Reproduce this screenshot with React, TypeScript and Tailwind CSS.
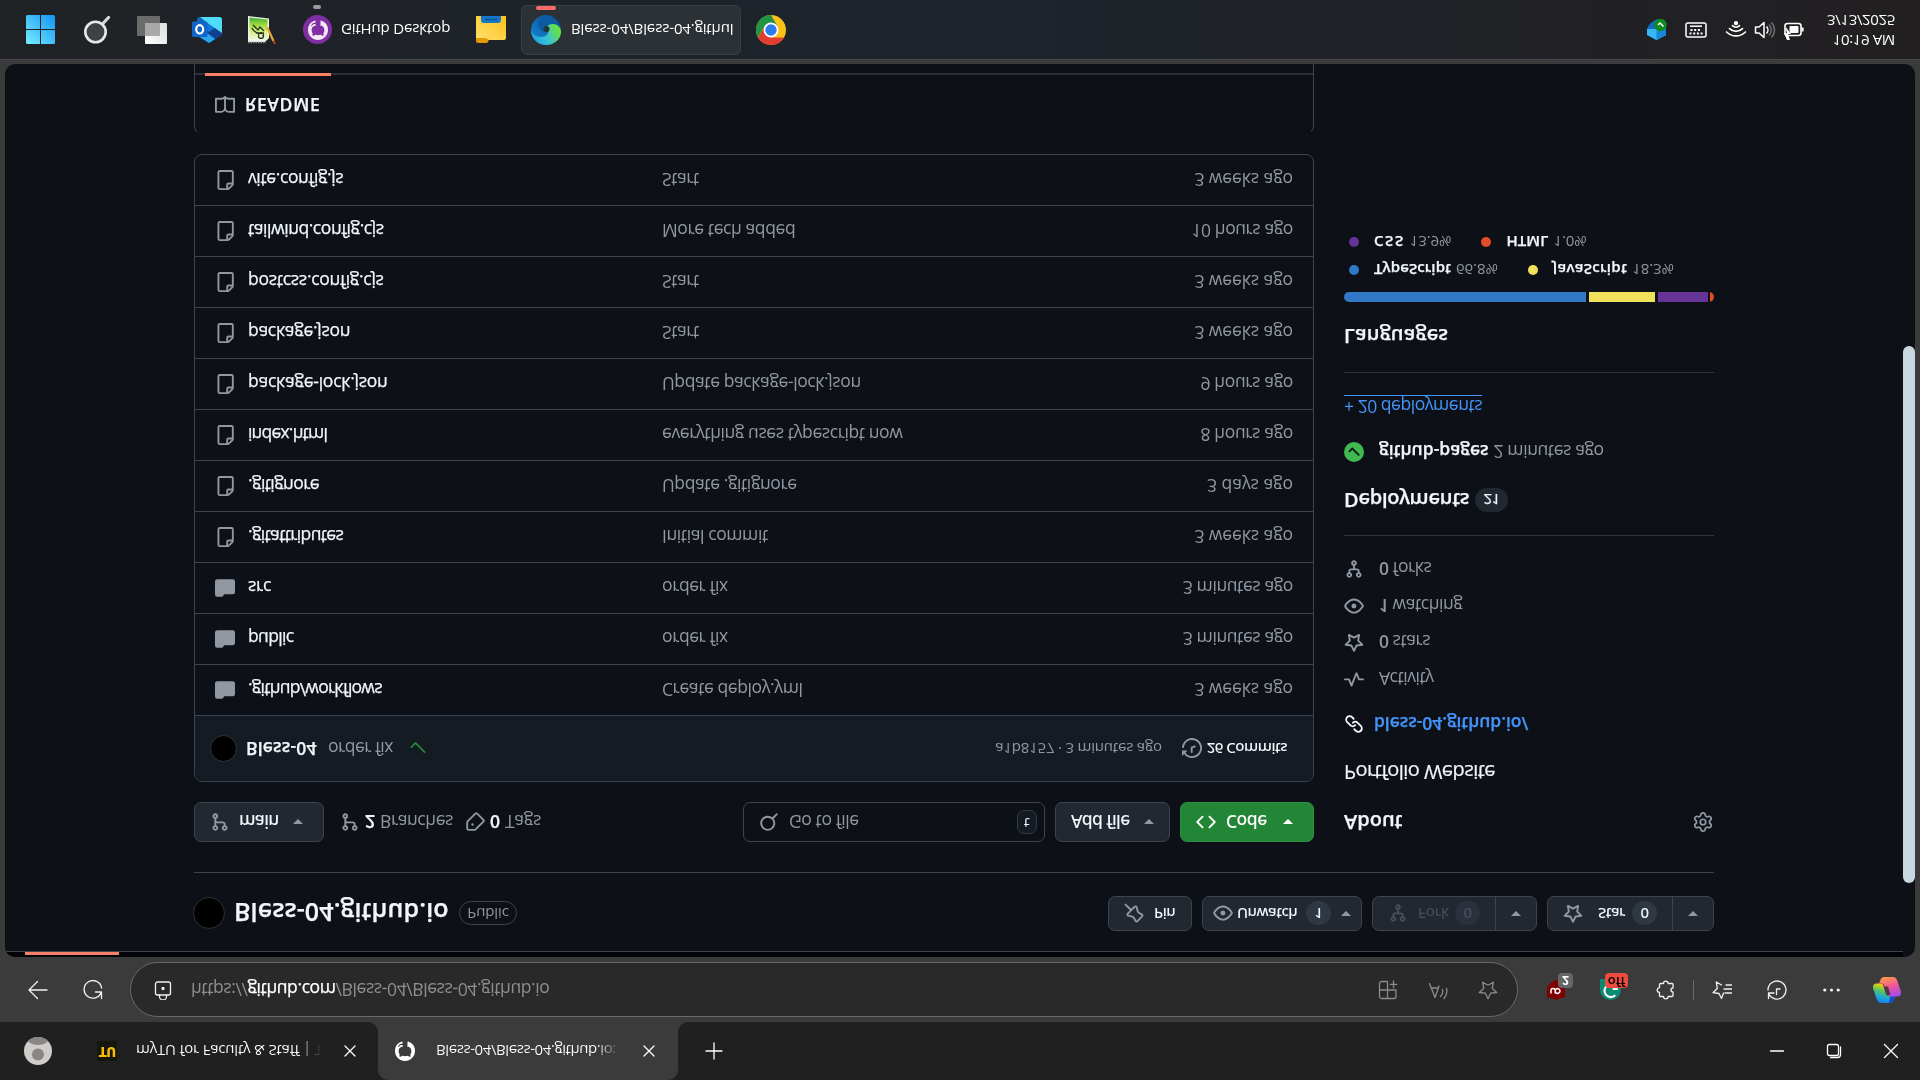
import React from "react";
import { Settings } from "lucide-react";

/* ---------- icon paths (16px grid) ---------- */
const P = {
  branch:
    "M9.5 3.25a2.25 2.25 0 1 1 3 2.122V6A2.5 2.5 0 0 1 10 8.5H6a1 1 0 0 0-1 1v1.128a2.251 2.251 0 1 1-1.5 0V5.372a2.25 2.25 0 1 1 1.5 0v1.836A2.493 2.493 0 0 1 6 7h4a1 1 0 0 0 1-1v-.628A2.25 2.25 0 0 1 9.5 3.25Zm-6 0a.75.75 0 1 0 1.5 0 .75.75 0 0 0-1.5 0Zm8.25-.75a.75.75 0 1 0 0 1.5.75.75 0 0 0 0-1.5ZM4.25 12a.75.75 0 1 0 0 1.5.75.75 0 0 0 0-1.5Z",
  fork: "M5 5.372v.878c0 .414.336.75.75.75h4.5a.75.75 0 0 0 .75-.75v-.878a2.25 2.25 0 1 1 1.5 0v.878a2.25 2.25 0 0 1-2.25 2.25h-1.5v2.128a2.251 2.251 0 1 1-1.5 0V8.5h-1.5A2.25 2.25 0 0 1 3.5 6.25v-.878a2.25 2.25 0 1 1 1.5 0ZM5 3.25a.75.75 0 1 0-1.5 0 .75.75 0 0 0 1.5 0Zm6.75.75a.75.75 0 1 0 0-1.5.75.75 0 0 0 0 1.5Zm-3 8.75a.75.75 0 1 0-1.5 0 .75.75 0 0 0 1.5 0Z",
  tag: "M1 7.775V2.75C1 1.784 1.784 1 2.75 1h5.025c.464 0 .91.184 1.238.513l6.25 6.25a1.75 1.75 0 0 1 0 2.474l-5.026 5.026a1.75 1.75 0 0 1-2.474 0l-6.25-6.25A1.752 1.752 0 0 1 1 7.775Zm1.5 0c0 .066.026.13.073.177l6.25 6.25a.25.25 0 0 0 .354 0l5.025-5.025a.25.25 0 0 0 0-.354l-6.25-6.25a.25.25 0 0 0-.177-.073H2.75a.25.25 0 0 0-.25.25ZM6 5a1 1 0 1 1 0 2 1 1 0 0 1 0-2Z",
  search:
    "M10.68 11.74a6 6 0 0 1-7.922-8.982 6 6 0 0 1 8.982 7.922l3.04 3.04a.749.749 0 0 1-.326 1.275.749.749 0 0 1-.734-.215ZM11.5 7a4.499 4.499 0 1 0-8.997 0A4.499 4.499 0 0 0 11.5 7Z",
  pin: "m11.294.984 3.722 3.722a1.75 1.75 0 0 1-.504 2.826l-1.327.613a3.089 3.089 0 0 0-1.707 2.084l-.584 2.454c-.317 1.332-1.972 1.8-2.94.832L5.75 11.311 1.78 15.28a.749.749 0 1 1-1.06-1.06l3.969-3.97-2.204-2.204c-.968-.968-.5-2.623.832-2.94l2.454-.584a3.08 3.08 0 0 0 2.084-1.707l.613-1.327a1.75 1.75 0 0 1 2.826-.504ZM6.283 9.723l2.732 2.731a.25.25 0 0 0 .42-.119l.584-2.454a4.586 4.586 0 0 1 2.537-3.098l1.328-.613a.25.25 0 0 0 .072-.404l-3.722-3.722a.25.25 0 0 0-.404.072l-.613 1.328a4.584 4.584 0 0 1-3.098 2.537l-2.454.584a.25.25 0 0 0-.119.42l2.731 2.732Z",
  eye: "M8 2c1.981 0 3.671.992 4.933 2.078 1.27 1.091 2.187 2.345 2.637 3.023a1.62 1.62 0 0 1 0 1.798c-.45.678-1.367 1.932-2.637 3.023C11.67 13.008 9.981 14 8 14c-1.981 0-3.671-.992-4.933-2.078C1.797 10.83.88 9.576.43 8.898a1.62 1.62 0 0 1 0-1.798c.45-.677 1.367-1.931 2.637-3.022C4.33 2.992 6.019 2 8 2ZM1.679 7.932a.12.12 0 0 0 0 .136c.411.622 1.241 1.75 2.366 2.717C5.176 11.758 6.527 12.5 8 12.5c1.473 0 2.825-.742 3.955-1.715 1.124-.967 1.954-2.096 2.366-2.717a.12.12 0 0 0 0-.136c-.412-.621-1.242-1.75-2.366-2.717C10.824 4.242 9.473 3.5 8 3.5c-1.473 0-2.825.742-3.955 1.715-1.124.967-1.954 2.096-2.366 2.717ZM8 10a2 2 0 1 1-.001-3.999A2 2 0 0 1 8 10Z",
  star: "M8 .25a.75.75 0 0 1 .673.418l1.882 3.815 4.21.612a.75.75 0 0 1 .416 1.279l-3.046 2.97.719 4.192a.751.751 0 0 1-1.088.791L8 12.347l-3.766 1.98a.75.75 0 0 1-1.088-.79l.72-4.194L.818 6.374a.75.75 0 0 1 .416-1.28l4.21-.611L7.327.668A.75.75 0 0 1 8 .25Zm0 2.445L6.615 5.5a.75.75 0 0 1-.564.41l-3.097.45 2.24 2.184a.75.75 0 0 1 .216.664l-.528 3.084 2.769-1.456a.75.75 0 0 1 .698 0l2.77 1.456-.53-3.084a.75.75 0 0 1 .216-.664l2.24-2.183-3.096-.45a.75.75 0 0 1-.564-.41L8 2.694Z",
  code: "m11.28 3.22 4.25 4.25a.75.75 0 0 1 0 1.06l-4.25 4.25a.749.749 0 0 1-1.275-.326.749.749 0 0 1 .215-.734L13.94 8l-3.72-3.72a.749.749 0 0 1 .326-1.275.749.749 0 0 1 .734.215Zm-6.56 0a.751.751 0 0 1 1.042.018.751.751 0 0 1 .018 1.042L2.06 8l3.72 3.72a.749.749 0 0 1-.326 1.275.749.749 0 0 1-.734-.215L.47 8.53a.75.75 0 0 1 0-1.06Z",
  history:
    "m.427 1.927 1.215 1.215a8.002 8.002 0 1 1-1.6 5.685.75.75 0 1 1 1.493-.154 6.5 6.5 0 1 0 1.18-4.458l1.358 1.358A.25.25 0 0 1 3.896 6H.25A.25.25 0 0 1 0 5.75V2.104a.25.25 0 0 1 .427-.177ZM7.75 4a.75.75 0 0 1 .75.75v2.992l2.028.812a.75.75 0 0 1-.557 1.392l-2.5-1A.751.751 0 0 1 7 8.25v-3.5A.75.75 0 0 1 7.75 4Z",
  file: "M2 1.75C2 .784 2.784 0 3.75 0h6.586c.464 0 .909.184 1.237.513l2.914 2.914c.329.328.513.773.513 1.237v9.586A1.75 1.75 0 0 1 13.25 16h-9.5A1.75 1.75 0 0 1 2 14.25Zm1.75-.25a.25.25 0 0 0-.25.25v12.5c0 .138.112.25.25.25h9.5a.25.25 0 0 0 .25-.25V6h-2.75A1.75 1.75 0 0 1 9 4.25V1.5Zm6.75.062V4.25c0 .138.112.25.25.25h2.688l-.011-.013-2.914-2.914-.013-.011Z",
  folder:
    "M1.75 1A1.75 1.75 0 0 0 0 2.75v10.5C0 14.216.784 15 1.75 15h12.5A1.75 1.75 0 0 0 16 13.25v-8.5A1.75 1.75 0 0 0 14.25 3H7.5a.25.25 0 0 1-.2-.1l-.9-1.2C6.07 1.26 5.55 1 5 1H1.75Z",
  book: "M0 1.75A.75.75 0 0 1 .75 1h4.253c1.227 0 2.317.59 3 1.501A3.743 3.743 0 0 1 11.006 1h4.245a.75.75 0 0 1 .75.75v10.5a.75.75 0 0 1-.75.75h-4.507a2.25 2.25 0 0 0-1.591.659l-.622.621a.75.75 0 0 1-1.06 0l-.622-.621A2.25 2.25 0 0 0 5.258 13H.75a.75.75 0 0 1-.75-.75Zm7.251 10.324.004-5.073-.002-2.253A2.25 2.25 0 0 0 5.003 2.5H1.5v9h3.757a3.75 3.75 0 0 1 1.994.574ZM8.755 4.75l-.004 7.322a3.752 3.752 0 0 1 1.992-.572H14.5v-9h-3.495a2.25 2.25 0 0 0-2.25 2.25Z",
  link: "m7.775 3.275 1.25-1.25a3.5 3.5 0 1 1 4.95 4.95l-2.5 2.5a3.5 3.5 0 0 1-4.95 0 .751.751 0 0 1 .018-1.042.751.751 0 0 1 1.042-.018 1.998 1.998 0 0 0 2.83 0l2.5-2.5a2.002 2.002 0 0 0-2.83-2.83l-1.25 1.25a.751.751 0 0 1-1.042-.018.751.751 0 0 1-.018-1.042Zm-4.69 9.64a1.998 1.998 0 0 0 2.83 0l1.25-1.25a.751.751 0 0 1 1.042.018.751.751 0 0 1 .018 1.042l-1.25 1.25a3.5 3.5 0 1 1-4.95-4.95l2.5-2.5a3.5 3.5 0 0 1 4.95 0 .751.751 0 0 1-.018 1.042.751.751 0 0 1-1.042.018 1.998 1.998 0 0 0-2.83 0l-2.5 2.5a1.998 1.998 0 0 0 0 2.83Z",
  pulse:
    "M6 2c.306 0 .582.187.696.471L10 10.731l1.304-3.26A.751.751 0 0 1 12 7h3.25a.75.75 0 0 1 0 1.5h-2.742l-1.812 4.528a.751.751 0 0 1-1.392 0L6 4.77 4.696 8.03A.75.75 0 0 1 4 8.5H.75a.75.75 0 0 1 0-1.5h2.742l1.812-4.529A.751.751 0 0 1 6 2Z",
  check:
    "M13.78 4.22a.75.75 0 0 1 0 1.06l-7.25 7.25a.75.75 0 0 1-1.06 0L2.22 9.28a.751.751 0 0 1 .018-1.042.751.751 0 0 1 1.042-.018L6 10.94l6.72-6.72a.75.75 0 0 1 1.06 0Z",
  github:
    "M8 0c4.42 0 8 3.58 8 8a8.013 8.013 0 0 1-5.45 7.59c-.4.08-.55-.17-.55-.38 0-.27.01-1.13.01-2.2 0-.75-.25-1.23-.54-1.48 1.78-.2 3.65-.88 3.65-3.95 0-.88-.31-1.59-.82-2.15.08-.2.36-1.02-.08-2.12 0 0-.67-.22-2.2.82-.64-.18-1.32-.27-2-.27-.68 0-1.36.09-2 .27-1.53-1.03-2.2-.82-2.2-.82-.44 1.1-.16 1.92-.08 2.12-.51.56-.82 1.28-.82 2.15 0 3.06 1.86 3.75 3.64 3.95-.23.2-.44.55-.51 1.07-.46.21-1.61.55-2.33-.66-.15-.24-.6-.83-1.23-.82-.67.01-.27.38.01.53.34.19.73.9.82 1.13.16.45.68 1.31 2.69.94 0 .67.01 1.3.01 1.49 0 .21-.15.45-.55.38A7.995 7.995 0 0 1 0 8c0-4.42 3.58-8 8-8Z",
};

function Oct({ d, className = "" }: { d: string; className?: string }) {
  return (
    <svg viewBox="0 0 16 16" fill="currentColor" className={`size-5 shrink-0 ${className}`}>
      <path d={d} />
    </svg>
  );
}

function Caret({ className = "" }: { className?: string }) {
  return (
    <svg viewBox="0 0 10 5" fill="currentColor" className={`h-[5px] w-[10px] shrink-0 ${className}`}>
      <path d="M0 0h10L5 5z" />
    </svg>
  );
}

function Line({ children, className = "" }: { children: React.ReactNode; className?: string }) {
  return (
    <svg viewBox="0 0 20 20" fill="none" stroke="currentColor" strokeWidth="1.3" strokeLinecap="round" strokeLinejoin="round" className={`size-5 shrink-0 ${className}`}>
      {children}
    </svg>
  );
}

const STAR = "M10 1.2l2.6 5.6 6.1.7-4.5 4.2 1.2 6.1L10 14.8l-5.4 3 1.2-6.1L1.3 7.5l6.1-.7z";

/* ---------- browser chrome ---------- */
function TabStrip() {
  return (
    <div className="flex h-[58px] shrink-0 items-center bg-[#202020] text-white">
      <svg viewBox="0 0 28 28" className="ml-6 size-7 shrink-0">
        <defs>
          <clipPath id="av"><circle cx="14" cy="14" r="14" /></clipPath>
        </defs>
        <g clipPath="url(#av)">
          <rect width="28" height="28" fill="#cfccc9" />
          <circle cx="14" cy="10.500" r="6" fill="#8a8683" />
          <path d="M2 28c1-5 6-8 12-8s11 3 12 8z" fill="#8a8683" />
        </g>
      </svg>
      <div className="ml-[45px] flex size-5 items-center justify-center bg-[#14170c]">
        <span className="font-['Inter'] text-[12.500px] leading-none font-black tracking-[-0.3px] text-[#ffbb00]">TU</span>
      </div>
      <div className="ml-[19px] w-[184px] bg-linear-to-r from-white from-88% to-[#303030] to-100% bg-clip-text text-[15px] tracking-[-0.21px] whitespace-nowrap text-transparent">
        myTU for Faculty &amp; Staff | To
      </div>
      <Line className="ml-[20px] size-5"><path d="M5 5l10 10M15 5L5 15" /></Line>
      <div className="ml-[8px] flex h-full items-end">
        <svg viewBox="0 0 10 10" className="size-[10px] shrink-0"><path d="M10 0v10H0A10 10 0 0 0 10 0z" fill="#3b3b3b" /></svg>
        <div className="flex h-full w-[300px] items-center rounded-t-[10px] bg-[#3b3b3b]">
          <Oct d={P.github} className="ml-[17px]" />
          <div className="ml-[21px] w-[182px] bg-linear-to-r from-white from-88% to-[#505050] to-100% bg-clip-text text-[15px] tracking-[-0.41px] whitespace-nowrap text-transparent">
            Bless-04/Bless-04.github.io:
          </div>
          <Line className="ml-[21px]"><path d="M5 5l10 10M15 5L5 15" /></Line>
        </div>
        <svg viewBox="0 0 10 10" className="size-[10px] shrink-0"><path d="M0 0v10h10A10 10 0 0 1 0 0z" fill="#3b3b3b" /></svg>
      </div>
      <Line className="ml-[16px]"><path d="M10 2v16M2 10h16" /></Line>
      <div className="mr-[19px] ml-auto flex items-center gap-[37px]">
        <Line><path d="M3.500 10h13" /></Line>
        <Line>
          <rect x="3.500" y="5.500" width="11" height="11" rx="2" />
          <path d="M6.500 3.500h7a3 3 0 0 1 3 3v7.500" />
        </Line>
        <Line><path d="M3.500 3.500l13 13M16.500 3.500l-13 13" /></Line>
      </div>
    </div>
  );
}

function AddressBar() {
  return (
    <div className="flex h-[65px] shrink-0 items-center bg-[#3b3b3b] pb-[1px] text-[#f1f1f1]">
      <Line className="ml-7"><path d="M19 10H1.500M9.500 1.500L1 10l8.500 8.500" /></Line>
      <Line className="ml-[35px]"><path d="M18.500 1.500v6.500h-6M18.300 8A8.800 8.800 0 1 0 18.600 12" /></Line>
      <div className="ml-[27px] flex h-[55px] w-[1388px] items-center rounded-full border border-[#6a6a6a] bg-[#292929]">
        <Line className="ml-[22px]">
          <rect x="2.500" y="5" width="15" height="13" rx="2" />
          <path d="M6.500 5V3.500a3.500 3.500 0 0 1 7 0V5" />
          <circle cx="10" cy="11.500" r="1" fill="currentColor" />
        </Line>
        <div className="ml-[18px] flex-1 text-[17.500px] tracking-[-0.4px] whitespace-nowrap text-[#8f8f8f]">
          https://<span className="text-white [-webkit-text-stroke:0.25px]">github.com</span>/Bless-04/Bless-04.github.io
        </div>
        <div className="mr-[19px] flex items-center gap-[30px] text-[#8c8c8c]">
          <Line>
            <path d="M9.500 18.500v-17M9.500 18.500h-6a2 2 0 0 1-2-2v-13a2 2 0 0 1 2-2h12.500a2 2 0 0 1 2 2v6.500M1.500 10h16.500M15.500 12.500v6.500M12.200 15.700h6.600" />
          </Line>
          <Line>
            <path d="M1.500 16.500L7 2.500l4 11.500M3.300 12h6.900M12.500 3.500a7 7 0 0 1 2 7M16 1.500a11 11 0 0 1 2.500 10" />
          </Line>
          <Line><path d={STAR} /></Line>
        </div>
      </div>
      <div className="relative ml-[28px] size-5">
        <svg viewBox="0 0 20 20" className="size-5">
          <path d="M10 0c2.500 1.700 5.500 2.300 9 2.500V10c0 5-4 8-9 10-5-2-9-5-9-10V2.500C4.500 2.300 7.500 1.700 10 0z" fill="#800000" />
          <path d="M5 6.500v3a2 2 0 0 0 4.200 0v-3M9.200 9.500a2.400 2.400 0 1 0 0-1" fill="none" stroke="#fff" strokeWidth="1.500" />
        </svg>
        <span className="absolute top-[12px] left-[12px] flex h-[15px] w-[15px] items-center justify-center rounded-[4px] bg-[#666] text-[12px] leading-none font-bold text-white">2</span>
      </div>
      <div className="relative ml-[34px] size-[21px]">
        <svg viewBox="0 0 20 20" className="size-[21px]">
          <path d="M10 0a10 10 0 0 1 10 10v10H0V10A10 10 0 0 1 10 0z" fill="#0a8a72" />
          <path d="M14.500 4.500a6 6 0 1 0 1.500 6h-4M15.800 10.500v4" fill="none" stroke="#fff" strokeWidth="2" />
        </svg>
        <span className="absolute top-[12px] left-[5px] flex h-[15px] w-[23px] items-center justify-center rounded-[4px] bg-[#ee4b40] pb-[2px] text-[13px] leading-none font-semibold text-black">off</span>
      </div>
      <Line className="ml-[35px]">
        <path d="M4 3.500h3.500a2.300 2.300 0 0 1 4.600 0H16a1 1 0 0 1 1 1V8a2 2 0 0 0 0 4v3.500a1 1 0 0 1-1 1h-3.900a2.300 2.300 0 0 1-4.600 0H4.500a1 1 0 0 1-1-1V12.300a2.300 2.300 0 0 1 0-4.600V4z" />
      </Line>
      <div className="ml-[17px] h-5 w-px bg-[#6b6b6b]" />
      <Line className="ml-[18px]">
        <path d="M11.500 7L9.500 1.500 7 6.500l-6 .8 4.300 4.200-1 6.500 5.200-3M13 7h6.500M12 11h7.500M14 15h5.500" />
      </Line>
      <Line className="ml-[35px]">
        <path d="M1.500 1.500V7H7M1.500 7a9 9 0 1 1-.5 3M9.500 5.500V11H13" />
      </Line>
      <svg viewBox="0 0 20 20" fill="currentColor" className="ml-[35px] size-5">
        <circle cx="2.800" cy="10" r="1.600" /><circle cx="9.500" cy="10" r="1.600" /><circle cx="16.200" cy="10" r="1.600" />
      </svg>
      <svg viewBox="0 0 28 26" className="ml-[31px] h-[26px] w-7">
        <defs>
          <linearGradient id="cp1" x1="0" y1="0" x2="0.3" y2="1">
            <stop offset="0" stopColor="#1a6be0" /><stop offset=".35" stopColor="#1aa5e0" /><stop offset=".65" stopColor="#4fc46a" /><stop offset="1" stopColor="#ffd000" />
          </linearGradient>
          <linearGradient id="cp2" x1="0.6" y1="0" x2="0.3" y2="1">
            <stop offset="0" stopColor="#a54bea" /><stop offset=".5" stopColor="#f0569a" /><stop offset="1" stopColor="#ff9a4a" />
          </linearGradient>
        </defs>
        <path d="M8 0h9c2 0 3 1.500 3.500 3L22 7h-6c-2 0-3 1-3.500 3L10 18c-.5 1-1.500 1.500-3 1.500H3.500C.5 19.500-.5 17 .2 14L4 3C5 1 6 0 8 0z" fill="url(#cp1)" />
        <path d="M16 0h2c2 0 2.500 1.500 3 3l1.200 4H17z" fill="#1650c8" />
        <path d="M20 26h-9c-2 0-3-1.500-3.500-3L6 19.500h2c2 0 3-1 3.500-3L14 9c.5-1.500 1.500-2.500 3-2.500h7.500c3 0 4 2.500 3.300 5.500L24 23c-1 2-2 3-4 3z" fill="url(#cp2)" />
        <path d="M11 16.500l3.500-8.500h3l-2.500 8.500z" fill="#5a3048" />
      </svg>
    </div>
  );
}

/* ---------- repository page ---------- */
const med = "font-['Noto_Sans'] font-medium";
const strong = "font-semibold [-webkit-text-stroke:0.25px]";

function RepoHeader() {
  return (
    <div className="flex h-[79px] items-center border-b border-[#3d444d] pb-[3px]">
      <div className="-ml-px size-8 rounded-full border border-[#2a3038] bg-black" />
      <span className={`ml-[9px] w-[215px] text-[25px] leading-8 tracking-[0.1px] whitespace-nowrap text-[#f0f6fc] ${strong}`}>Bless-04.github.io</span>
      <span className="ml-[10px] flex h-6 w-[58px] items-center justify-center rounded-full border border-[#3d444d] text-[15px] leading-none tracking-[-0.1px] text-[#9198a1]">Public</span>
      <div className={`ml-auto flex gap-[10px] text-[15px] tracking-[-0.5px] text-[#f0f6fc] ${med}`}>
        <div className="flex h-[35px] w-[84px] items-center rounded-[7px] border border-[#3d444d] bg-[#212830]">
          <Oct d={P.pin} className="ml-[15px] text-[#9198a1]" />
          <span className="ml-[10px]">Pin</span>
        </div>
        <div className="flex h-[35px] w-[160px] items-center rounded-[7px] border border-[#3d444d] bg-[#212830]">
          <Oct d={P.eye} className="ml-[10px] text-[#9198a1]" />
          <span className="ml-[4px] w-[69px]">Unwatch</span>
          <span className="flex h-6 w-[25px] items-center justify-center rounded-full bg-[#2f3742]">1</span>
          <Caret className="ml-[10px] text-[#9198a1]" />
        </div>
        <div className="flex h-[35px] w-[165px] items-center rounded-[7px] border border-[#3d444d] bg-[#212830]">
          <div className="flex h-full w-[123px] items-center border-r border-[#3d444d] text-[#484f58]">
            <Oct d={P.fork} className="ml-[15px]" />
            <span className="ml-[10px] w-[37px] font-normal tracking-normal">Fork</span>
            <span className="flex h-6 w-[25px] items-center justify-center rounded-full bg-[#2a313c]">0</span>
          </div>
          <Caret className="ml-[15px] text-[#9198a1]" />
        </div>
        <div className="flex h-[35px] w-[167px] items-center rounded-[7px] border border-[#3d444d] bg-[#212830]">
          <div className="flex h-full w-[125px] items-center border-r border-[#3d444d]">
            <Oct d={P.star} className="ml-[15px] text-[#9198a1]" />
            <span className="ml-[15px] w-[34px]">Star</span>
            <span className="flex h-6 w-[25px] items-center justify-center rounded-full bg-[#2f3742]">0</span>
          </div>
          <Caret className="ml-[15px] text-[#9198a1]" />
        </div>
      </div>
    </div>
  );
}

function FileToolbar() {
  return (
    <div className="flex h-10 items-center text-[17.500px] text-[#9198a1]">
      <div className="flex h-10 w-[130px] items-center rounded-[7px] border border-[#3d444d] bg-[#212830]">
        <Oct d={P.branch} className="ml-[15px]" />
        <span className={`ml-[9px] w-[54px] tracking-[-0.7px] text-[#f0f6fc] ${med}`}>main</span>
        <Caret />
      </div>
      <Oct d={P.branch} className="ml-[16px]" />
      <span className={`ml-[5px] text-[#f0f6fc] ${strong}`}>2</span>
      <span className="ml-[5px] w-[75px] tracking-[-0.4px]">Branches</span>
      <Oct d={P.tag} className="ml-[10px]" />
      <span className={`ml-[5px] text-[#f0f6fc] ${strong}`}>0</span>
      <span className="ml-[5px] tracking-[-0.3px]">Tags</span>
      <div className="ml-auto flex h-10 w-[302px] items-center rounded-[7px] border border-[#3d444d]">
        <Oct d={P.search} className="ml-[15px]" />
        <span className="ml-[10px] tracking-[-0.4px]">Go to file</span>
        <span className="mr-[7px] ml-auto flex h-6 w-[20px] items-center justify-center rounded-[7px] border border-[#343b44] bg-[#151b23] font-['Liberation_Mono'] text-[13px] leading-none text-[#f0f6fc]">t</span>
      </div>
      <div className="ml-[10px] flex h-10 w-[115px] items-center rounded-[7px] border border-[#3d444d] bg-[#212830]">
        <span className={`ml-[15px] w-[73px] tracking-[-0.6px] whitespace-nowrap text-[#f0f6fc] ${med}`}>Add file</span>
        <Caret />
      </div>
      <div className="ml-[10px] flex h-10 w-[134px] items-center rounded-[7px] border border-[#2f8f40] bg-[#238636] text-white">
        <Oct d={P.code} className="ml-[15px]" />
        <span className={`ml-[10px] w-[57px] tracking-[-0.5px] ${med}`}>Code</span>
        <Caret />
      </div>
    </div>
  );
}

type Row = { name: string; msg: string; date: string; dir?: boolean; track?: string; dtrack?: string };
const files: Row[] = [
  { name: ".github/workflows", msg: "Create deploy.yml", date: "3 weeks ago", dir: true, track: "tracking-[-0.75px]", dtrack: "tracking-[-0.1px]" },
  { name: "public", msg: "order fix", date: "3 minutes ago", dir: true, track: "tracking-[-0.65px]" },
  { name: "src", msg: "order fix", date: "3 minutes ago", dir: true },
  { name: ".gitattributes", msg: "Initial commit", date: "3 weeks ago", track: "tracking-[-0.66px]", dtrack: "tracking-[-0.1px]" },
  { name: ".gitignore", msg: "Update .gitignore", date: "3 days ago", track: "tracking-[-0.6px]", dtrack: "tracking-[-0.05px]" },
  { name: "index.html", msg: "everything uses typescript now", date: "8 hours ago", track: "tracking-[-0.8px]", dtrack: "tracking-[-0.35px]" },
  { name: "package-lock.json", msg: "Update package-lock.json", date: "9 hours ago", track: "tracking-[-0.25px]", dtrack: "tracking-[-0.35px]" },
  { name: "package.json", msg: "Start", date: "3 weeks ago", dtrack: "tracking-[-0.1px]" },
  { name: "postcss.config.cjs", msg: "Start", date: "3 weeks ago", track: "tracking-[-0.28px]", dtrack: "tracking-[-0.1px]" },
  { name: "tailwind.config.cjs", msg: "More tech added", date: "10 hours ago", track: "tracking-[-0.44px]" },
  { name: "vite.config.js", msg: "Start", date: "3 weeks ago", track: "tracking-[-0.38px]", dtrack: "tracking-[-0.1px]" },
];

function FileTable() {
  return (
    <div className="mt-5 overflow-hidden rounded-[8px] border border-[#3d444d] text-[17.500px] text-[#9198a1]">
      <div className="flex h-[65px] items-center bg-[#151b23]">
        <div className="ml-[15px] size-[27px] rounded-full border border-[#2f363e] bg-black" />
        <span className={`ml-[9px] w-[82px] tracking-[0.2px] text-[#f0f6fc] ${strong}`}>Bless-04</span>
        <span className="w-[80px] tracking-[-0.5px]">order fix</span>
        <Oct d={P.check} className="text-[#238636]" />
        <span className="mr-[20px] ml-auto text-[15px] tracking-[-0.2px]">a1b8157 · 3 minutes ago</span>
        <Oct d={P.history} />
        <span className={`mr-[26px] ml-[5px] text-[15px] tracking-[-0.5px] text-[#f0f6fc] ${med}`}>26 Commits</span>
      </div>
      {files.map((f) => (
        <div key={f.name} className="flex h-[51px] items-center border-t border-[#3d444d] whitespace-nowrap">
          <Oct d={f.dir ? P.folder : P.file} className="ml-5" />
          <span className={`ml-[13px] w-[414px] text-[#f0f6fc] [-webkit-text-stroke:0.25px] ${f.track ?? "tracking-[-0.3px]"}`}>{f.name}</span>
          <span className="flex-1 tracking-[-0.4px]">{f.msg}</span>
          <span className={`mr-5 ${f.dtrack ?? "tracking-[-0.4px]"}`}>{f.date}</span>
        </div>
      ))}
    </div>
  );
}

function Readme() {
  return (
    <div className="mt-5 h-[90px] rounded-t-[8px] border border-[#3d444d] border-t-transparent">
      <div className="flex h-[60px] border-b-2 border-[#2b3138]">
        <div className="ml-[10px] flex h-[60px] w-[126px] items-center border-b-[3px] border-[#f78166]">
          <Oct d={P.book} className="ml-[10px] text-[#9198a1]" />
          <span className={`ml-[10px] text-[17.500px] tracking-[0.7px] text-[#f0f6fc] ${strong}`}>README</span>
        </div>
      </div>
    </div>
  );
}

function Stat({ icon, n, label }: { icon: string; n?: string; label: string }) {
  return (
    <div className="flex h-[36.500px] items-center tracking-[-0.45px]">
      <Oct d={icon} className="mr-[15px]" />
      {n && <b className="mr-[4px] font-semibold">{n}</b>}
      {label}
    </div>
  );
}

function Lang({ dot, name, pct, track = "tracking-[0.1px]" }: { dot: string; name: string; pct: string; track?: string }) {
  return (
    <div className="flex items-center text-[15px] leading-7">
      <span className={`mr-[15px] ml-[5px] size-[10px] rounded-full ${dot}`} />
      <span className={`text-[#f0f6fc] ${strong} ${track}`}>{name}</span>
      <span className="ml-[5px] tracking-[-0.1px]">{pct}</span>
    </div>
  );
}

function Sidebar() {
  return (
    <aside className="ml-[30px] w-[370px] text-[17.500px] text-[#9198a1]">
      <div className="flex h-10 items-center justify-between text-[20px] font-semibold">
        <span className={`text-[#f0f6fc] ${strong}`}>About</span>
        <Settings className="size-[22px]" strokeWidth={1.9} />
      </div>
      <div className="mt-[15px] flex h-[30px] items-center text-[20px] tracking-[-0.55px] text-[#f0f6fc] [-webkit-text-stroke:0.2px]">Portfolio Website</div>
      <div className="mt-[15px] flex h-9 items-center">
        <Oct d={P.link} className="text-[#f0f6fc]" />
        <span className={`ml-[10px] tracking-[-0.05px] text-[#4493f8] ${strong}`}>bless-04.github.io/</span>
      </div>
      <div className="mt-[9px]">
        <Stat icon={P.pulse} label="Activity" />
        <Stat icon={P.star} n="0" label="stars" />
        <Stat icon={P.eye} n="1" label="watching" />
        <Stat icon={P.fork} n="0" label="forks" />
      </div>
      <div className="mt-[15px] h-px bg-[#2f353d]" />
      <div className={`mt-[20px] flex h-[30px] items-center text-[20px] tracking-[-0.25px] text-[#f0f6fc] ${strong}`}>
        Deployments
        <span className="ml-[6px] flex h-6 w-[33px] items-center justify-center rounded-full bg-[#212830] text-[15px] leading-none font-normal">21</span>
      </div>
      <div className="mt-[18px] flex h-[30px] items-center">
        <span className="flex size-5 items-center justify-center rounded-full bg-[#3fb950]">
          <Oct d={P.check} className="size-[14px] stroke-[#0d1117] stroke-[0.800px] text-[#0d1117]" />
        </span>
        <span className={`ml-[15px] text-[#f0f6fc] ${strong}`}>github-pages</span>
        <span className="ml-[5px] tracking-[-0.4px]">2 minutes ago</span>
      </div>
      <div className="mt-[19px] h-[23px] w-[138px] border-b border-[#4493f8] leading-[22px] tracking-[-0.45px] whitespace-nowrap text-[#4493f8]">+ 20 deployments</div>
      <div className="mt-[22px] h-px bg-[#2f353d]" />
      <div className={`mt-[21px] flex h-[30px] items-center text-[20px] tracking-[0.15px] text-[#f0f6fc] ${strong}`}>Languages</div>
      <div className="mt-[19px] flex h-[10px] overflow-hidden rounded-full">
        <div className="w-[242px] bg-[#3178c6]" />
        <div className="ml-[3px] w-[66px] bg-[#f1e05a]" />
        <div className="ml-[3px] w-[50px] bg-[#663399]" />
        <div className="ml-[2px] flex-1 bg-[#e34c26]" />
      </div>
      <div className="mt-[8px] flex gap-[25px]">
        <Lang dot="bg-[#3178c6]" name="TypeScript" pct="66.8%" />
        <Lang dot="bg-[#f1e05a]" name="JavaScript" pct="18.3%" track="tracking-[0.3px]" />
      </div>
      <div className="flex gap-[25px]">
        <Lang dot="bg-[#663399]" name="CSS" pct="13.9%" track="tracking-[1.6px]" />
        <Lang dot="bg-[#e34c26]" name="HTML" pct="1.0%" />
      </div>
    </aside>
  );
}

function Page() {
  return (
    <div className="flex h-[897px] shrink-0 bg-[#3b3b3b] px-[5px] pb-1">
      <div className="relative h-[893px] w-full overflow-hidden rounded-[10px] bg-[#0d1117]">
        <div className="mr-[12px] h-[6px] border-b border-[#3d444d] bg-[#010409] pt-[2px] pl-[20px]">
          <div className="h-[3px] w-[94px] bg-[#f78166]" />
        </div>
        <div className="ml-[189px] w-[1520px]">
          <RepoHeader />
          <div className="mt-[30px] flex">
            <main className="w-[1120px]">
              <FileToolbar />
              <FileTable />
              <Readme />
            </main>
            <Sidebar />
          </div>
        </div>
        <div className="absolute top-[74px] right-0 h-[537px] w-3 rounded-full bg-[#c9d7e0]" />
      </div>
    </div>
  );
}

/* ---------- taskbar ---------- */
function Taskbar() {
  return (
    <div className="flex h-[60px] shrink-0 items-center border-t border-[#46464a] bg-linear-to-r from-[#1f2225] via-[#1d242c] to-[#221f21] pb-[1px] text-[15px] text-white">
      <svg viewBox="0 0 29 29" className="ml-[26px] size-[29px]">
        <defs>
          <linearGradient id="win" x1="0" y1="0" x2="1" y2="1"><stop offset="0" stopColor="#77efff" /><stop offset="1" stopColor="#1191f5" /></linearGradient>
        </defs>
        <path d="M0 1.500Q0 0 1.500 0H14v14H0zM15 0h12.500Q29 0 29 1.500V14H15zM0 15h14v14H1.500Q0 29 0 27.500zM15 15h14v12.500q0 1.500-1.500 1.500H15z" fill="url(#win)" />
      </svg>
      <svg viewBox="0 0 28 28" fill="none" className="ml-[28px] size-7">
        <path d="M18.500 19l7 7.500" stroke="#d8d8d8" strokeWidth="3.200" strokeLinecap="round" />
        <circle cx="12.500" cy="12" r="10.200" fill="#3c4247" stroke="#e8e8e8" strokeWidth="2.600" />
      </svg>
      <svg viewBox="0 0 30 28" className="ml-[26px] h-7 w-[30px]">
        <defs>
          <linearGradient id="tv" x1="0" y1="0" x2="1" y2="1"><stop offset="0" stopColor="#fff" /><stop offset="1" stopColor="#dcdcdc" /></linearGradient>
        </defs>
        <rect x="0" y="8" width="23" height="20" rx="1" fill="#6b6b6b" />
        <rect x="8" y="0" width="22" height="21" rx="1" fill="url(#tv)" />
        <rect x="8" y="8" width="15" height="13" fill="#a9a9a9" />
      </svg>
      <svg viewBox="0 0 30 26" className="ml-[25px] h-[26px] w-[30px]">
        <path d="M17 0l13 8v15q0 3-3 3H8q-3 0-3-3V7z" fill="#1268b8" />
        <path d="M5 8l12-8 6 4-14 10z" fill="#28a8ea" />
        <path d="M13 12l11-8 6 4v6L17 22z" fill="#123f8c" />
        <path d="M9 17l8-6 13 9v3q0 3-3 3H14z" fill="#0f78d4" />
        <path d="M17 19l13-9v13q0 3-3 3H8z" fill="#4fdcf8" />
        <rect x="0" y="6" width="15.500" height="15.500" rx="1.500" fill="#1066c8" />
        <ellipse cx="7.700" cy="13.700" rx="3.500" ry="4.200" fill="none" stroke="#fff" strokeWidth="2.200" />
      </svg>
      <svg viewBox="0 0 29 28" className="ml-[25px] h-7 w-[29px]">
        <defs>
          <linearGradient id="np" x1="0" y1="0" x2="0" y2="1"><stop offset="0" stopColor="#f4f8ee" /><stop offset=".35" stopColor="#dcf08c" /><stop offset=".7" stopColor="#9ad83a" /><stop offset="1" stopColor="#3fae3a" /></linearGradient>
        </defs>
        <path d="M1 2h17l4 4v19.500L1 28z" fill="#eef3ea" />
        <path d="M2.500 3.500h14.500l3.500 4v17l-18 2z" fill="url(#np)" />
        <path d="M1 1.500h18" stroke="#8b8b8b" strokeWidth="1.500" strokeDasharray="1.500 1" />
        <path d="M5 16c2-5 6-6 12-5M6 19l5-5 2 3 4-4M9 11h6M12 8.500a2.500 1.800 0 1 0 4 0 2.500 1.800 0 1 0-4 0" fill="none" stroke="#23331a" strokeWidth="1.300" />
        <path d="M20 17l6.500-14" stroke="#e9a92c" strokeWidth="2.200" />
        <path d="M26.500 3l1.500-3" stroke="#b5432f" strokeWidth="2" />
      </svg>
      <div className="relative ml-[27px] size-[29px] shrink-0 rounded-full bg-[#7f2ea3]">
        <Oct d={P.github} className="absolute top-[4.500px] left-[4.500px] text-[#f1e9f5]" />
        <div className="absolute top-[35px] left-[10px] h-1 w-2 rounded-full bg-[#9a9a9a]" />
      </div>
      <span className="ml-[9px] w-[110px] tracking-[-0.15px] whitespace-nowrap">GitHub Desktop</span>
      <svg viewBox="0 0 30 27" className="ml-[25px] h-[27px] w-[30px]">
        <defs>
          <linearGradient id="ex" x1="0" y1="0" x2="1" y2="1"><stop offset="0" stopColor="#ffdf6e" /><stop offset="1" stopColor="#ffc21a" /></linearGradient>
        </defs>
        <path d="M0 2q0-2 2-2h8q1.500 0 2 1l1.500 4H0z" fill="#e29a00" />
        <path d="M0 5h10l3-2h15q2 0 2 2v22H0z" fill="url(#ex)" />
        <path d="M5 27v-4q0-3 3-3h14q3 0 3 3v4z" fill="#1577c8" />
        <path d="M9 23.500h12" stroke="#0b4f8e" strokeWidth="1.300" />
      </svg>
      <div className="ml-[15px] flex h-[50px] w-[220px] items-center rounded-[6px] border border-[#393e43] bg-[#2c3136]">
        <div className="relative ml-[9px] size-[30px] shrink-0">
          <svg viewBox="0 0 30 30" className="size-[30px]">
            <defs>
              <linearGradient id="e1" x1="0" y1="0" x2="1" y2=".4"><stop offset="0" stopColor="#1c9be0" /><stop offset=".55" stopColor="#35c1d8" /><stop offset="1" stopColor="#66e04c" /></linearGradient>
              <linearGradient id="e2" x1="0" y1="0" x2=".8" y2="1"><stop offset="0" stopColor="#1490df" /><stop offset="1" stopColor="#0a4a8f" /></linearGradient>
            </defs>
            <circle cx="15" cy="15" r="15" fill="url(#e2)" />
            <path d="M0 14C1 6 7 0 15 0c9 0 15 6.500 15 13 0 5-3.500 8-8 8-4 0-6-1.500-6-3 0-1 1.500-1.500 1.500-4 0-3-3-6-7.500-6-5 0-8.500 3-10 6z" fill="url(#e1)" />
            <path d="M16 18c0 1.500 2 3.500 6 3.500 2 0 4-.6 5.500-1.800C25 26 20 30 15 30c-5-1-8-5-7.500-10 .3-3 2-5.500 4.500-6.500 2-1 4-.5 5 .5.500 2.500-1 3-1 4z" fill="#0c59a4" />
            <circle cx="15.500" cy="16" r="3" fill="#22363f" />
          </svg>
          <div className="absolute top-[35px] left-[5px] h-1 w-5 rounded-full bg-[#ff6b6b]" />
        </div>
        <span className="ml-[10px] w-[165px] tracking-[-0.12px] whitespace-nowrap">Bless-04/Bless-04.githul</span>
      </div>
      <svg viewBox="0 0 30 30" className="ml-[15px] size-[30px]">
        <circle cx="15" cy="15" r="15" fill="#fbc116" />
        <path d="M2 7.500A15 15 0 0 1 28 7.500H15L8.500 18.700z" fill="#e33b2e" />
        <path d="M2 7.500A15 15 0 0 0 15 30l6.500-11.200-13 0z" fill="#229342" />
        <circle cx="15" cy="15" r="7.500" fill="#fff" />
        <circle cx="15" cy="15" r="5.700" fill="#2b7de9" />
      </svg>
      <div className="mr-[25px] ml-auto flex items-center">
        <svg viewBox="0 0 20 21" className="h-[21px] w-5">
          <path d="M0 5l9.500-5L19 5v9c-2 3-5 6-9 7C3 17 0 14 0 9z" fill="#0f6cc0" />
          <path d="M0 5l9.500-5L19 5v6H0z" fill="#35b7f1" />
          <path d="M9.500 0L19 5v6H9.500z" fill="#1b86d8" />
          <circle cx="13.500" cy="15" r="6.200" fill="#0f8a1f" />
          <path d="M11 15l2 2 3.500-3.500" stroke="#fff" strokeWidth="1.500" fill="none" />
        </svg>
        <svg viewBox="0 0 22 16" fill="none" stroke="#fff" className="ml-[18px] h-4 w-[22px]">
          <rect x="1" y="1" width="20" height="14" rx="2" strokeWidth="1.500" />
          <path d="M4.500 4.500h13M5.500 8h11" strokeWidth="2" strokeDasharray="2 1.700" />
          <path d="M5 11.800h12" strokeWidth="1.500" />
        </svg>
        <svg viewBox="0 0 22 17" fill="none" stroke="#fff" strokeWidth="1.700" strokeLinecap="round" className="ml-[18px] h-[17px] w-[22px]">
          <path d="M1.500 6a13.500 13.500 0 0 1 19 0M4.500 9.300a9.200 9.200 0 0 1 13 0M7.500 12.300a5 5 0 0 1 7 0" />
          <circle cx="11" cy="14.800" r="1.300" fill="#fff" />
        </svg>
        <svg viewBox="0 0 22 18" fill="none" stroke="#fff" strokeWidth="1.500" strokeLinejoin="round" className="ml-[7px] h-[18px] w-[22px]">
          <path d="M1.500 6v6h3.500l5 4.500v-15L5 6zM12.500 5.500a5 5 0 0 1 0 7" />
          <path d="M15 3.500a8 8 0 0 1 0 11M17.500 1.500a11 11 0 0 1 0 15" stroke="#6d6f72" />
        </svg>
        <svg viewBox="0 0 22 20" className="ml-[7px] h-5 w-[22px]">
          <rect x="2" y="4.500" width="16" height="12" rx="2.500" fill="none" stroke="#fff" strokeWidth="1.600" />
          <rect x="6.500" y="7" width="9" height="7" rx="1" fill="#fff" />
          <path d="M19.500 8.500v4" stroke="#fff" strokeWidth="2.200" />
          <path d="M4 0l-3 7h3l-2 7 6-8H5l2-6z" fill="#fff" />
        </svg>
        <div className="ml-[20px] flex w-[70px] flex-col items-end pb-[3px] leading-5 tracking-[-0.35px] whitespace-nowrap">
          <span>10:19 AM</span>
          <span>3/13/2025</span>
        </div>
      </div>
    </div>
  );
}

export default function App() {
  return (
    <div className="flex h-[1080px] w-[1920px] -scale-y-100 flex-col overflow-hidden bg-[#3b3b3b] font-['Open_Sans','Noto_Sans',sans-serif]">
      <TabStrip />
      <AddressBar />
      <Page />
      <Taskbar />
    </div>
  );
}
